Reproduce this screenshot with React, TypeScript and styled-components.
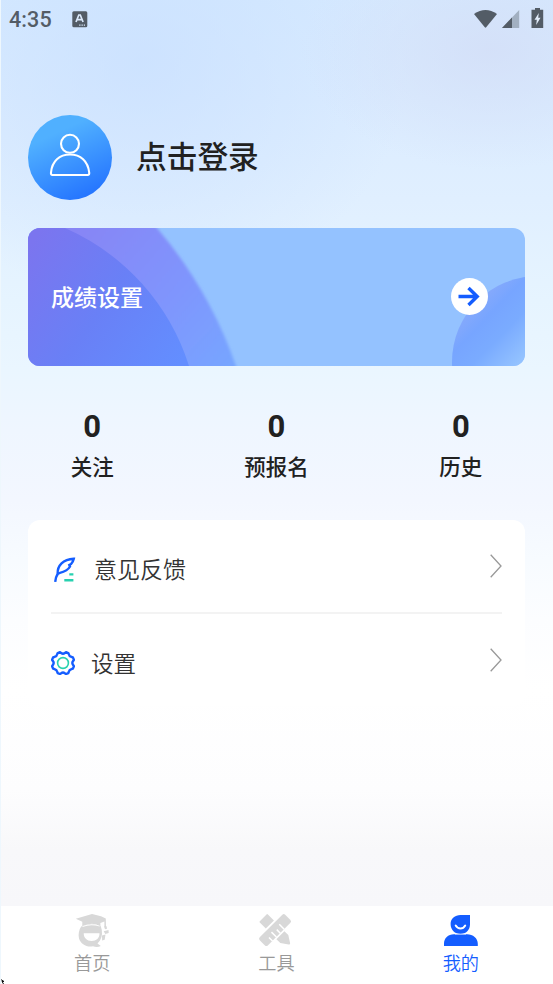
import React from "react";
import styled, { createGlobalStyle } from "styled-components";

const GlobalStyle = createGlobalStyle`
  * { box-sizing: border-box; }
  body { margin: 0; }
  svg { display: block; }
`;

const Screen = styled.div`
  width: 553px;
  height: 984px;
  position: relative;
  overflow: hidden;
  display: flex;
  flex-direction: column;
  font-family: "Noto Sans CJK SC", sans-serif;
  color: #212121;
  border-left: 1px solid #eef7fd;
  background:
    radial-gradient(ellipse 190px 120px at 490px 50px, rgba(211, 222, 247, 0.8), rgba(211, 222, 247, 0) 100%),
    radial-gradient(ellipse 270px 240px at 140px 60px, rgba(200, 223, 255, 0.7), rgba(200, 223, 255, 0) 100%),
    linear-gradient(180deg, #d6eaff 0, #dbecff 100px, #e0efff 200px, #e6f4ff 300px, #eaf6ff 370px, #eff6ff 430px, #f3f7ff 500px, #f7fbff 560px, #fcfdff 620px, #ffffff 690px, #fdfdfe 790px, #f8f8fa 850px, #f7f7fa 906px);
`;

const StatusBar = styled.header`
  height: 38px;
  padding: 0 8px 0 8px;
  display: flex;
  align-items: center;
  color: #535c66;
`;

const Clock = styled.span`
  width: 63px;
  padding-top: 1px;
  font: 500 21.5px/38px Roboto, sans-serif;
  letter-spacing: 0.1px;
`;

const StatusIcons = styled.div`
  margin-left: auto;
  display: flex;
`;

const Content = styled.main`
  flex: 1;
  padding: 77px 28px 0 27px;
`;

const Profile = styled.section`
  height: 85px;
  display: flex;
  align-items: center;
  gap: 24px;
`;

const Avatar = styled.div`
  width: 84px;
  height: 85px;
  border-radius: 50%;
  background: linear-gradient(155deg, #50b0ff 25%, #2575ff 88%);
`;

const LoginLabel = styled.h1`
  margin: 0;
  padding-bottom: 5px;
  font-size: 30.7px;
  line-height: 44px;
  font-weight: 500;
`;

const Banner = styled.section`
  position: relative;
  overflow: hidden;
  height: 138px;
  margin-top: 28px;
  padding: 0 37px 2px 23px;
  border-radius: 12px;
  background: #94c2ff;
  display: flex;
  align-items: center;
  justify-content: space-between;
`;

const BannerArt = styled.svg`
  position: absolute;
  inset: 0;
`;

const BannerTitle = styled.span`
  position: relative;
  color: #fff;
  font-size: 23px;
  line-height: 34px;
  font-weight: 500;
`;

const BannerArrow = styled.span`
  position: relative;
  width: 37px;
  height: 37px;
  border-radius: 50%;
  background: #fff;
`;

const Stats = styled.section`
  display: grid;
  grid-template-columns: repeat(3, 1fr);
  margin: 41px -28px 0 -28px;
`;

const Stat = styled.div`
  text-align: center;
`;

const StatValue = styled.div`
  font: 700 31px/40px Roboto, sans-serif;
`;

const StatLabel = styled.div`
  font-size: 21.5px;
  line-height: 32px;
  font-weight: 500;
  margin-top: 3px;
`;

const Menu = styled.section`
  height: 186px;
  margin-top: 38px;
  padding: 0 23px 0 23px;
  border-radius: 12px;
  background: #fff;
`;

const MenuItem = styled.div<{ $divided?: boolean }>`
  height: ${(p) => (p.$divided ? 94 : 92)}px;
  display: flex;
  align-items: center;
  border-bottom: ${(p) => (p.$divided ? "2px solid #f3f3f3" : "0")};
`;

const MenuIcon = styled.span<{ $width: number }>`
  width: ${(p) => p.$width}px;
  padding-top: 5px;
`;

const MenuLabel = styled.span<{ $size: number }>`
  flex: 1;
  padding-top: 4px;
  color: #333;
  font-size: ${(p) => p.$size}px;
  font-weight: 350;
  line-height: 34px;
`;

const TabBar = styled.nav`
  height: 78px;
  margin-left: -1px;
  background: #fff;
  display: grid;
  grid-template-columns: repeat(3, 1fr);
`;

const Tab = styled.div<{ $active?: boolean }>`
  display: flex;
  flex-direction: column;
  align-items: center;
  padding-top: 6px;
  color: ${(p) => (p.$active ? "#145dff" : "#999")};
  font-size: 18.2px;
  font-weight: 350;
  line-height: 24px;
`;

const Pointer = styled.svg`
  position: absolute;
  left: -1px;
  bottom: 0;
`;

const Chevron = () => (
  <svg width="12" height="24" viewBox="0 0 12 24" fill="none" stroke="#999" strokeWidth="1.3">
    <path d="M.7 .8 11 12 .7 23.2" />
  </svg>
);

const FeatherIcon = () => (
  <svg width="25" height="26" viewBox="0 0 25 26" fill="none">
    <path d="M4.2 25.8C4.5 22.5 5 20.5 6.6 17.8C6.3 9.6 12 3.4 22.8 2.8c-.5 2.4-1.5 4-2.8 5.3l-1.7.9.7 1.5c-2.3 4.2-5.8 5.4-10.1 6.4-1.6.4-2.7 1.4-3.2 3.2" stroke="#145dff" strokeWidth="2.4" />
    <path d="M18.3 18.4h4.1M13.3 24.3h9.1" stroke="#28d1b0" strokeWidth="2.4" />
  </svg>
);

const GearIcon = () => (
  <svg width="24" height="24" viewBox="0 0 24 24" fill="none">
    <path d="M9 1.2 10.2 2q1.8 1.4 3.6 0L15 1.2l2.3.9.6 1.3q.3 2 2.4 2.4l1.6.6 1 2.4-.8 1.3q-1.5 1.9 0 3.8l.8 1.3-1 2.4-1.6.6q-2.1.4-2.4 2.4l-.6 1.5-2.3.9-1.2-.8q-1.8-1.4-3.6 0l-1.2.8-2.3-.9-.6-1.5q-.3-2-2.4-2.4l-1.6-.6-1-2.4.8-1.3q1.5-1.9 0-3.8l-.8-1.3 1-2.4 1.6-.6q2.1-.4 2.4-2.4l.6-1.3z" stroke="#145dff" strokeWidth="2.4" strokeLinejoin="round" />
    <circle cx="12" cy="12" r="5.4" stroke="#28d1b0" strokeWidth="1.6" />
  </svg>
);

const GraduateIcon = () => (
  <svg width="36" height="38" viewBox="0 0 36 38" fill="#d8d8d8">
    <path d="M1.8 6.8 18 2l9 2.2L31.8 6.4 32 15h-1.6V9.6l-4 1.4v3.4Q18 9.2 8.3 14.6V9.8z" />
    <path d="M7.2 14.5Q17 9 26.8 14.2 29.6 22 26 28.5l-2.5 3 3.3 2.5q-3.5 1.8-7.8.3C12.5 35.5 6.8 32 5 26.5 4 22.5 5 17.5 7.2 14.5" />
    <path d="M9.7 21.2h15.8c.2 4.8-3.2 7.7-7.9 7.7s-7.9-3-7.9-7.7M8.5 14.9q8.5-3.3 17.2-.4v-.8q-8.5-3-17.2.3z" fill="#fff" />
    <path d="m30 14.5 2.6-.2.4 2.4-2 .6zM29.7 19.3l4.8-1.4.2 3-3.4 1zM28 23.5l3.5-1-.8 5.2-2.6.8z" />
  </svg>
);

const ToolsIcon = () => (
  <svg width="36" height="38" viewBox="0 0 36 38" fill="#d8d8d8">
    <g transform="translate(17 18) rotate(45)">
      <path d="M-17-5q0-1 1-1h8.5V5.5H-16q-1 0-1-1zM7.5-5.8H13l7 4.4q1.3 1 0 2L13 5.5H7.5z" />
    </g>
    <g transform="translate(17 18) rotate(-45)">
      <rect x="-18" y="-5.6" width="36" height="11.4" rx="2" />
      <path d="M-9.5 6V1M-4 6V-1M1.5 6V1M7 6V-1" stroke="#fff" strokeWidth="1.5" />
    </g>
  </svg>
);

const PersonIcon = () => (
  <svg width="36" height="38" viewBox="0 0 36 38">
    <path d="M7.6 12C7.6 6.5 12 3 17.5 3H27v9.3C27 18 23 22 17.5 22S7.6 18 7.6 12M1 34v-2.2C1 26 5 22.2 11 22.2h13c6 0 10.8 3.8 10.8 9.6V34z" fill="#145dff" />
    <path d="M12.7 13.5c2.4 4 7.2 4 9.5 0" fill="none" stroke="#fff" strokeWidth="2" strokeLinecap="round" />
    <path d="M12 22.1h11" stroke="#fff" strokeWidth=".7" />
  </svg>
);

export default function App() {
  return (
    <>
      <GlobalStyle />
      <Screen>
        <StatusBar>
          <Clock>4:35</Clock>
          <svg width="16" height="17" viewBox="0 0 16 17">
            <rect x="0.3" y=".2" width="15" height="16" rx="1.5" fill="#535c66" />
            <path d="m4 11 2.8-7h1.5l2.8 7M5.2 8.7h4.6" fill="none" stroke="#dbe9fb" strokeWidth="1.7" />
            <path d="M7.2 14.2h1.3m1 0h1.3m1 0H13" stroke="#dbe9fb" strokeWidth="1.2" />
          </svg>
          <StatusIcons>
            <svg width="71" height="22" viewBox="0 0 71 22">
              <path d="M0 6Q11.5-2 23 6L12.2 19.3q-.7.7-1.4 0z" fill="#535c66" />
              <path d="M45.2 2v18H28z" fill="#a2b0c1" />
              <path d="M38 9.5V20H28z" fill="#535c66" />
              <path d="M61 0h5v1.8h3.2V20H57.5V1.8H61z" fill="#535c66" />
              <path d="m64.8 5-4.3 6.8h2.3l-.6 5.2 4.3-7.3h-2.3z" fill="#e2edfb" />
            </svg>
          </StatusIcons>
        </StatusBar>

        <Content>
          <Profile>
            <Avatar>
              <svg width="84" height="85" viewBox="0 0 84 85" fill="none" stroke="#fff" strokeWidth="2.1">
                <circle cx="42" cy="28.8" r="9" />
                <path d="M24.6 60q-2 0-1.6-2.5C24 46 31.5 39.5 42 39.5S60 46 61.2 57.5q.3 2.5-1.6 2.5z" />
              </svg>
            </Avatar>
            <LoginLabel>点击登录</LoginLabel>
          </Profile>

          <Banner>
            <BannerArt width="498" height="138" viewBox="0 0 498 138">
              <defs>
                <linearGradient id="outerArc" gradientUnits="userSpaceOnUse" x1="50" y1="0" x2="210" y2="138">
                  <stop offset="0" stopColor="#8785f5" />
                  <stop offset=".55" stopColor="#7f95fd" />
                  <stop offset="1" stopColor="#76a6ff" />
                </linearGradient>
                <linearGradient id="innerArc" gradientUnits="userSpaceOnUse" x1="0" y1="20" x2="155" y2="130">
                  <stop offset="0" stopColor="#7b75ef" />
                  <stop offset=".5" stopColor="#6980f6" />
                  <stop offset="1" stopColor="#638eff" />
                </linearGradient>
                <linearGradient id="orb" gradientUnits="userSpaceOnUse" x1="440" y1="67" x2="500" y2="125">
                  <stop offset="0" stopColor="#8facf9" />
                  <stop offset=".35" stopColor="#77a5ff" />
                  <stop offset=".62" stopColor="#7aabff" />
                  <stop offset="1" stopColor="#93c2ff" />
                </linearGradient>
                <filter id="soft"><feGaussianBlur stdDeviation="1.5" /></filter>
              </defs>
              <path d="M-8-8H123L129 0A430 430 0 0 1 208 138V146H-8Z" fill="url(#outerArc)" filter="url(#soft)" />
              <path d="M0 0H37A225 225 0 0 1 161 138H0Z" fill="url(#innerArc)" />
              <circle cx="510" cy="134" r="86" fill="url(#orb)" />
            </BannerArt>
            <BannerTitle>成绩设置</BannerTitle>
            <BannerArrow>
              <svg width="37" height="37" viewBox="0 0 37 37" fill="none" stroke="#145dff" strokeWidth="3.4">
                <path d="M7.5 18.5h18M17.5 10l8.7 8.5-8.7 8.5" />
              </svg>
            </BannerArrow>
          </Banner>

          <Stats>
            {["关注", "预报名", "历史"].map((label) => (
              <Stat key={label}>
                <StatValue>0</StatValue>
                <StatLabel>{label}</StatLabel>
              </Stat>
            ))}
          </Stats>

          <Menu>
            <MenuItem $divided>
              <MenuIcon $width={43}><FeatherIcon /></MenuIcon>
              <MenuLabel $size={23}>意见反馈</MenuLabel>
              <Chevron />
            </MenuItem>
            <MenuItem>
              <MenuIcon $width={40}><GearIcon /></MenuIcon>
              <MenuLabel $size={22.5}>设置</MenuLabel>
              <Chevron />
            </MenuItem>
          </Menu>
        </Content>

        <TabBar>
          <Tab><GraduateIcon />首页</Tab>
          <Tab><ToolsIcon />工具</Tab>
          <Tab $active><PersonIcon />我的</Tab>
        </TabBar>
        <Pointer width="5" height="5" viewBox="0 0 5 5">
          <path d="M0 0 4 2.5H2L3.5 5" fill="#fff" stroke="#111" strokeWidth="1" />
        </Pointer>
      </Screen>
    </>
  );
}
